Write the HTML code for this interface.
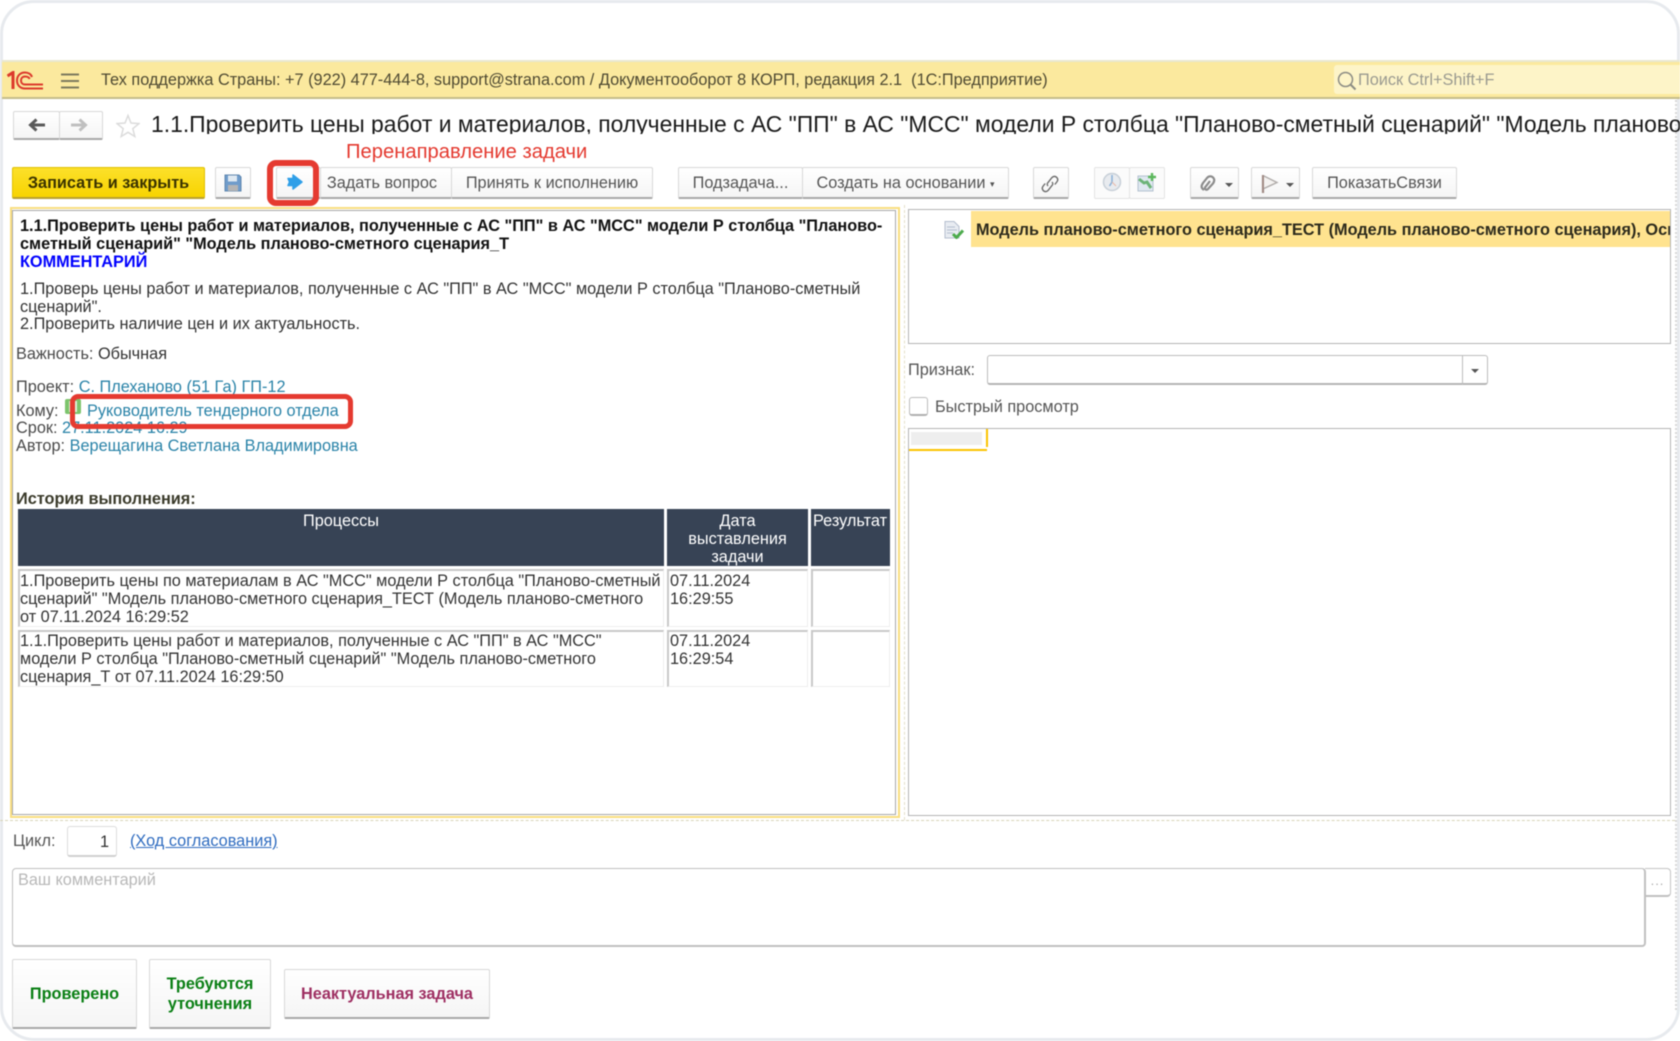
<!DOCTYPE html>
<html lang="ru"><head><meta charset="utf-8"><title>1C</title>
<style>
html,body{margin:0;padding:0;background:#fff}
#p{position:relative;width:1680px;height:1041px;overflow:hidden;background:#fff;font-family:"Liberation Sans",Arial,sans-serif;font-size:16.3px;color:#333;filter:blur(.4px)}
#p *{box-sizing:border-box}
.a{position:absolute}
.t{position:absolute;white-space:nowrap;line-height:18px;height:18px}
.b{font-weight:bold}
.l{color:#2a83a8}
.btn{position:absolute;top:167px;height:32px;background:linear-gradient(#fff,#f5f5f5);border:1px solid #d8d8d8;border-bottom:2px solid #a8a8a8;border-radius:2px;color:#555;text-align:center;line-height:31px;white-space:nowrap}
.dis{border:1px solid #e4e4e4;background:#fbfbfb}
.th{position:absolute;background:#374355;color:#fff;text-align:center;line-height:18px;padding-top:3px;top:509px;height:57px}
.td{position:absolute;border:2px solid #c8c8c8;border-width:2px 1px 1px 2px;border-right-color:#eee;border-bottom-color:#eee}
.box{position:absolute;border:1px solid #b4b4b4;background:#fff}
svg{position:absolute;display:block}
</style></head><body><div id="p">

<div class="a" style="left:0;top:0;width:1680px;height:1041px;border:3px solid #e7eaee;border-radius:34px"></div>
<div class="a" style="left:1675px;top:100px;width:2px;height:910px;border-right:2px dotted #d8d8d8"></div>

<!-- header -->
<div class="a" style="left:2px;top:60px;width:1678px;height:39px;background:#fbe99e;border-top:2px solid #e9e7cf;border-bottom:2px solid #c4bc8a"></div>
<svg style="left:7px;top:71px" width="36" height="19" viewBox="0 0 36 19"><path d="M0.500 5 6 1.500V18" fill="none" stroke="#dc3a2c" stroke-width="3"/><path d="M25 6C24 3 21 1.500 18 1.500 13 1.500 10 5 10 9.500s3 8 8 8h18" fill="none" stroke="#dc3a2c" stroke-width="2"/><path d="M22.500 8C22 6 20 5.500 18 5.500c-2.500 0-4 1.800-4 4s1.500 4 4 4h18" fill="none" stroke="#dc3a2c" stroke-width="2"/></svg>
<svg style="left:60px;top:72px" width="20" height="18"><path d="M1 2.500h18M1 9h18M1 15.500h18" stroke="#7d7a5e" stroke-width="2"/></svg>
<div class="t" style="left:101px;top:71px;color:#4f4a32">Тех поддержка Страны: +7 (922) 477-444-8, support@strana.com / Документооборот 8 КОРП, редакция 2.1&nbsp; (1С:Предприятие)</div>
<div class="a" style="left:1334px;top:65px;width:346px;height:29px;background:#fdf4c8;border-radius:3px 0 0 3px"></div>
<svg style="left:1336px;top:70px" width="22" height="22"><circle cx="9.500" cy="9.500" r="7" fill="none" stroke="#8c8c84" stroke-width="1.500"/><path d="M14.500 14.500l5 5" stroke="#8c8c84" stroke-width="2"/></svg>
<div class="t" style="left:1358px;top:71px;color:#9a9a90">Поиск Ctrl+Shift+F</div>

<!-- nav -->
<div class="btn" style="left:13px;top:111px;width:47px;height:29px"></div>
<div class="btn" style="left:59px;top:111px;width:44px;height:29px"></div>
<svg style="left:27px;top:117px" width="18" height="16"><path d="M18 8H5M9.500 2.500 3.500 8l6 5.500" fill="none" stroke="#5a5a5a" stroke-width="3"/></svg>
<svg style="left:71px;top:117px" width="18" height="16"><path d="M0 8h13M8.500 2.500 14.500 8l-6 5.500" fill="none" stroke="#c0c0c0" stroke-width="3"/></svg>
<svg style="left:116px;top:114px" width="24" height="24" viewBox="0 0 24 24"><path d="M12 1.500l3 7.500 8 .6-6.200 5.100 2 7.800L12 18.300 5.200 22.500l2-7.800L1 9.600 9 9z" fill="none" stroke="#dcdcdc" stroke-width="1.500"/></svg>
<div class="a" style="left:151px;top:108px;width:1529px;height:26px;overflow:hidden"><div class="t" style="left:0;top:2px;font-size:22.900px;line-height:28px;height:28px;color:#1a1a1a">1.1.Проверить цены работ и материалов, полученные с АС "ПП" в АС "МСС" модели Р столбца "Планово-сметный сценарий" "Модель планово-сметного сценария_Т</div></div>

<div class="t" style="left:346px;top:141px;font-size:20.200px;line-height:22px;height:22px;color:#e4392f">Перенаправление задачи</div>

<!-- toolbar -->
<div class="btn b" style="left:12px;width:193px;background:linear-gradient(#fce02a,#f8d400);border:1px solid #e0c000;border-bottom:2px solid #b8a030;color:#3a3300">Записать и закрыть</div>
<div class="btn" style="left:215px;width:36px"></div>
<svg style="left:224px;top:174px" width="18" height="18"><path d="M1 1h14l2 2v14H1z" fill="#6f9ccb" stroke="#5f86ae"/><rect x="4" y="1.500" width="9" height="6" fill="#dfe9f2"/><rect x="4" y="11" width="10" height="6" fill="#b4b4b4"/></svg>
<div class="btn" style="left:276px;width:45px"></div>
<svg style="left:286px;top:173px" width="18" height="18"><path d="M2 5.500h5V2l9 7-9 7v-3.500H2l1.500-3.500z" fill="#2f9fe8" stroke="#2f9fe8" stroke-linejoin="round" stroke-width="1.500"/></svg>
<div class="btn" style="left:320px;width:132px;padding-right:8px">Задать вопрос</div>
<div class="btn" style="left:451px;width:202px">Принять к исполнению</div>
<div class="btn" style="left:678px;width:125px">Подзадача...</div>
<div class="btn" style="left:802px;width:207px">Создать на основании <span style="font-size:9px;vertical-align:1px">▾</span></div>
<div class="btn" style="left:1033px;width:36px"></div>
<svg style="left:1041px;top:174px" width="18" height="20" viewBox="0 0 18 20"><path d="M7 12c-1-1-1-2.500 0-3.500l4-5c1.500-1.500 3.500-1.500 4.800 0s1.200 3 0 4.500l-2 2.500M11 8c1 1 1 2.500 0 3.500l-4 5c-1.500 1.500-3.500 1.500-4.800 0s-1.200-3 0-4.500l2-2.500" fill="none" stroke="#6c6c6c" stroke-width="1.400"/></svg>
<div class="btn dis" style="left:1094px;width:36px"></div>
<div class="btn dis" style="left:1129px;width:36px"></div>
<svg style="left:1102px;top:172px" width="20" height="20"><circle cx="10" cy="10" r="8.500" fill="#e8ebef" stroke="#c8d0d8" stroke-width="1.500"/><path d="M10 3v7l-2.500 4" fill="none" stroke="#8ab0d8" stroke-width="1.500"/><path d="M10 10l4 4" stroke="#e8b8a8"/></svg>
<svg style="left:1137px;top:172px" width="20" height="20"><rect x="1" y="4" width="15" height="15" fill="#dfe8f0" stroke="#b4c2d0"/><path d="M2 7l5 4 3-1 4 6" fill="none" stroke="#6cb478" stroke-width="3"/><path d="M15 1v8M11 5h8" stroke="#5cb85c" stroke-width="2.400"/></svg>
<div class="btn" style="left:1190px;width:49px"></div>
<svg style="left:1200px;top:175px" width="17" height="17" viewBox="0 0 17 17"><path d="M4 15c-3-2-3-4-1-7l4-5c2-2.500 5-2 6.500 0s.5 4-.5 5.500L8 14c-1.500 1.500-3.500.5-3-1.500l5-6.500" fill="none" stroke="#8c8c8c" stroke-width="2.200"/></svg>
<div class="a" style="left:1225px;top:183px;border:4px solid transparent;border-top:4px solid #555;width:0;height:0"></div>
<div class="btn" style="left:1251px;width:49px"></div>
<svg style="left:1260px;top:174px" width="19" height="19"><path d="M3 1v18" stroke="#a08a84" stroke-width="2.200"/><path d="M4 2l13 6.500-13 6" fill="#f4f2f0" stroke="#b0acaa" stroke-width="1.400"/></svg>
<div class="a" style="left:1286px;top:183px;border:4px solid transparent;border-top:4px solid #555;width:0;height:0"></div>
<div class="btn" style="left:1312px;width:145px">ПоказатьСвязи</div>

<!-- left panel -->
<div class="a" style="left:10px;top:207px;width:890px;height:611px;border:2px solid #f9de80"></div>
<div class="box" style="left:12px;top:210px;width:884px;height:605px;border-color:#a8a8a8"></div>
<div class="t b" style="left:20px;top:217px;color:#111">1.1.Проверить цены работ и материалов, полученные с АС "ПП" в АС "МСС" модели Р столбца "Планово-</div>
<div class="t b" style="left:20px;top:235px;color:#111">сметный сценарий" "Модель планово-сметного сценария_Т</div>
<div class="t b" style="left:20px;top:252.500px;color:#0000ff">КОММЕНТАРИЙ</div>
<div class="t" style="left:20px;top:280px">1.Проверь цены работ и материалов, полученные с АС "ПП" в АС "МСС" модели Р столбца "Планово-сметный</div>
<div class="t" style="left:20px;top:297.500px">сценарий".</div>
<div class="t" style="left:20px;top:315px">2.Проверить наличие цен и их актуальность.</div>
<div class="t" style="left:16px;top:345px;color:#4a4a4a">Важность: <span style="color:#333">Обычная</span></div>
<div class="t" style="left:16px;top:378px;color:#4a4a4a">Проект: <span class="l">С. Плеханово (51 Га) ГП-12</span></div>
<div class="t" style="left:16px;top:402px;color:#4a4a4a">Кому:</div>
<div class="a" style="left:65px;top:399px;width:16px;height:15px;background:#7cc46c;border-radius:2px"></div>
<div class="a" style="left:69px;top:401px;width:8px;height:11px;background:#dff0d8"></div>
<div class="t l" style="left:87px;top:402px">Руководитель тендерного отдела</div>
<div class="t" style="left:16px;top:419px;color:#4a4a4a">Срок: <span class="l">27.11.2024 16:29</span></div>
<div class="t" style="left:16px;top:437px;color:#4a4a4a">Автор: <span class="l">Верещагина Светлана Владимировна</span></div>
<div class="a" style="left:70px;top:394px;width:283px;height:35px;border:5px solid #e53a30;border-radius:8px"></div>
<div class="a" style="left:267px;top:160px;width:52px;height:46px;border:6px solid #e53a30;border-radius:9px"></div>
<div class="t b" style="left:16px;top:490px;color:#3a3a2a">История выполнения:</div>

<div class="th" style="left:18px;width:646px">Процессы</div>
<div class="th" style="left:667px;width:141px">Дата<br>выставления<br>задачи</div>
<div class="th" style="left:811px;width:79px;text-align:left;padding-left:2px">Результат</div>
<div class="td" style="left:18px;top:569px;width:646px;height:58px"></div>
<div class="td" style="left:667px;top:569px;width:141px;height:58px"></div>
<div class="td" style="left:811px;top:569px;width:79px;height:58px"></div>
<div class="td" style="left:18px;top:630px;width:646px;height:57px"></div>
<div class="td" style="left:667px;top:630px;width:141px;height:57px"></div>
<div class="td" style="left:811px;top:630px;width:79px;height:57px"></div>
<div class="t" style="left:20px;top:571.500px">1.Проверить цены по материалам в АС "МСС" модели Р столбца "Планово-сметный</div>
<div class="t" style="left:20px;top:589.500px">сценарий" "Модель планово-сметного сценария_ТЕСТ (Модель планово-сметного</div>
<div class="t" style="left:20px;top:607.500px">от 07.11.2024 16:29:52</div>
<div class="t" style="left:670px;top:571.500px">07.11.2024</div>
<div class="t" style="left:670px;top:589.500px">16:29:55</div>
<div class="t" style="left:20px;top:631.500px">1.1.Проверить цены работ и материалов, полученные с АС "ПП" в АС "МСС"</div>
<div class="t" style="left:20px;top:649.500px">модели Р столбца "Планово-сметный сценарий" "Модель планово-сметного</div>
<div class="t" style="left:20px;top:667.500px">сценария_Т от 07.11.2024 16:29:50</div>
<div class="t" style="left:670px;top:631.500px">07.11.2024</div>
<div class="t" style="left:670px;top:649.500px">16:29:54</div>

<!-- right panel -->
<div class="a" style="left:904px;top:205px;width:0;height:615px;border-left:1px dashed #e4e0c8"></div>
<div class="box" style="left:908px;top:209px;width:763px;height:135px"></div>
<div class="a" style="left:971px;top:211px;width:699px;height:36px;background:#ffe38f"></div>
<svg style="left:944px;top:221px" width="20" height="18"><path d="M1 0.500h9l5 5V17H1z" fill="#e8ecf2" stroke="#b4bece"/><path d="M3 6h8M3 9h10M3 12h6" stroke="#b4bece"/><path d="M9 13l3.500 3.500L19 9.500" stroke="#4cab4c" fill="none" stroke-width="3"/></svg>
<div class="a" style="left:971px;top:211px;width:699px;height:36px;overflow:hidden"><div class="t b" style="left:5px;top:10px;color:#2c2a1c">Модель планово-сметного сценария_ТЕСТ (Модель планово-сметного сценария), Основание</div></div>
<div class="t" style="left:908px;top:360.500px;color:#555">Признак:</div>
<div class="a" style="left:987px;top:355px;width:501px;height:30px;border:1px solid #bdbdbd;border-bottom:2px solid #b4b4b4;border-radius:3px;background:#fff"></div>
<div class="a" style="left:1462px;top:355px;width:1px;height:30px;background:#bdbdbd"></div>
<div class="a" style="left:1471px;top:369px;border:4px solid transparent;border-top:4px solid #555;width:0;height:0"></div>
<div class="a" style="left:909px;top:397px;width:19px;height:19px;border:1px solid #bdbdbd;border-bottom:2px solid #b0b0b0;border-radius:3px"></div>
<div class="t" style="left:935px;top:397.500px;color:#555">Быстрый просмотр</div>
<div class="box" style="left:908px;top:428px;width:763px;height:388px"></div>
<div class="a" style="left:911px;top:432px;width:71px;height:13px;background:#eee"></div>
<div class="a" style="left:909px;top:449px;width:78px;height:2px;background:#fcc400"></div>
<div class="a" style="left:986px;top:429px;width:2px;height:18px;background:#fcc400"></div>

<!-- bottom -->
<div class="a" style="left:0;top:820px;width:1675px;height:0;border-top:1px dashed #d8d4b8"></div>
<div class="t" style="left:13px;top:832px;color:#555">Цикл:</div>
<div class="a" style="left:67px;top:826px;width:50px;height:31px;border:1px solid #dcdcdc;border-bottom:2px solid #d0d0d0;border-radius:3px;text-align:right;line-height:30px;padding-right:7px;color:#333">1</div>
<div class="t" style="left:130px;top:832px;color:#2f6cc0;text-decoration:underline">(Ход согласования)</div>
<div class="a" style="left:12px;top:868px;width:1634px;height:79px;border:1px solid #c0c0c0;border-width:1.500px 2px 2px 1.500px;border-radius:4px"></div>
<div class="t" style="left:18px;top:871px;color:#b8b8b8">Ваш комментарий</div>
<div class="a" style="left:1645px;top:868px;width:26px;height:29px;border:1px solid #c4c4c4;border-left:0;border-bottom:2px solid #c0c0c0;border-radius:0 4px 4px 0;color:#aaa;text-align:center;line-height:24px;font-size:13px;letter-spacing:1px">...</div>

<div class="btn b" style="left:12px;top:959px;width:125px;height:70px;line-height:68px;color:#0a7f14;padding:0">Проверено</div>
<div class="btn b" style="left:149px;top:959px;width:122px;height:70px;line-height:20px;padding-top:14px;color:#0a7f14">Требуются<br>уточнения</div>
<div class="btn b" style="left:284px;top:969px;width:206px;height:50px;line-height:48px;color:#9e2f62">Неактуальная задача</div>
</div></body></html>
